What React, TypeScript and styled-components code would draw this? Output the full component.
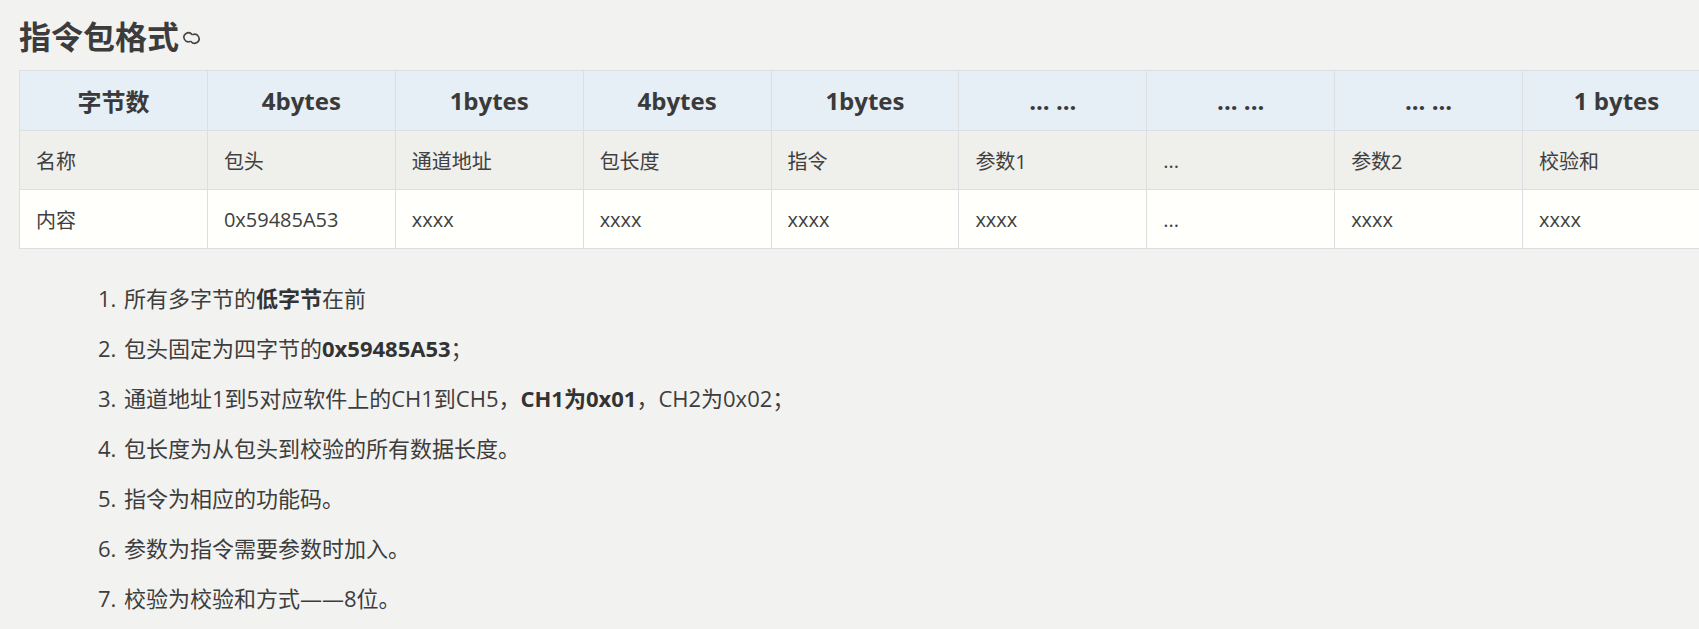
import React from "react";
import styled, { createGlobalStyle } from "styled-components";

const Global = createGlobalStyle`
  html, body { margin: 0; padding: 0; background: #f2f2f1; }
  body { font-family: "Open Sans", "Noto Sans CJK SC", sans-serif; color: #404040; overflow: hidden; }
`;

const Page = styled.div`
  width: 1699px;
  height: 629px;
  padding: 0 0 0 19px;
  box-sizing: border-box;
  overflow: hidden;
`;

const Title = styled.h2`
  margin: 0;
  padding-top: 4px;
  height: 70px;
  box-sizing: border-box;
  font-size: 32px;
  font-weight: 700;
  color: #3c3c3c;
  display: flex;
  align-items: center;
  line-height: 1;
  svg { margin-left: 1px; margin-top: 2px; }
`;

const Table = styled.table`
  border-collapse: collapse;
  width: 1692px;
  table-layout: fixed;
`;

const Th = styled.th`
  height: 59px;
  background: #e6eef6;
  border: 1px solid #dcdfe2;
  font-size: 24px;
  font-weight: 700;
  color: #3a3a3a;
  text-align: center;
  padding: 0;
`;

const Td = styled.td<{ $alt?: boolean }>`
  height: 58px;
  background: ${(p) => (p.$alt ? "#efefec" : "#fffffc")};
  border: 1px solid #dcdfe2;
  font-size: 20px;
  color: #404040;
  padding: 0 16px;
`;

const List = styled.ol`
  margin: 24px 0 0 0;
  padding-left: 103px;
  font-size: 22px;
  line-height: 50px;
  color: #3d3d3d;
  li { padding-left: 2px; }
  b { font-weight: 700; color: #333; }
`;

const cols = ["4bytes", "1bytes", "4bytes", "1bytes", "... ...", "... ...", "... ...", "1 bytes"];
const names = ["名称", "包头", "通道地址", "包长度", "指令", "参数1", "...", "参数2", "校验和"];
const vals = ["内容", "0x59485A53", "xxxx", "xxxx", "xxxx", "xxxx", "...", "xxxx", "xxxx"];

export default function App() {
  return (
    <Page>
      <Global />
      <Title>
        指令包格式
        <svg width="24" height="18" viewBox="0 0 24 18" fill="none" stroke="#444" strokeWidth="1.6" strokeLinecap="round">
          <path d="M10 12.5 A4.5 4.5 0 1 1 12 5.5" />
          <path d="M13 5.5 A4.5 4.5 0 1 1 11 12.5" />
        </svg>
      </Title>
      <Table>
        <thead>
          <tr>
            <Th>字节数</Th>
            {cols.map((c, i) => (
              <Th key={i}>{c}</Th>
            ))}
          </tr>
        </thead>
        <tbody>
          <tr>{names.map((n, i) => <Td $alt key={i}>{n}</Td>)}</tr>
          <tr>{vals.map((n, i) => <Td key={i}>{n}</Td>)}</tr>
        </tbody>
      </Table>
      <List>
        <li>所有多字节的<b>低字节</b>在前</li>
        <li>包头固定为四字节的<b>0x59485A53</b>；</li>
        <li>通道地址1到5对应软件上的CH1到CH5，<b>CH1为0x01</b>，CH2为0x02；</li>
        <li>包长度为从包头到校验的所有数据长度。</li>
        <li>指令为相应的功能码。</li>
        <li>参数为指令需要参数时加入。</li>
        <li>校验为校验和方式——8位。</li>
      </List>
    </Page>
  );
}
